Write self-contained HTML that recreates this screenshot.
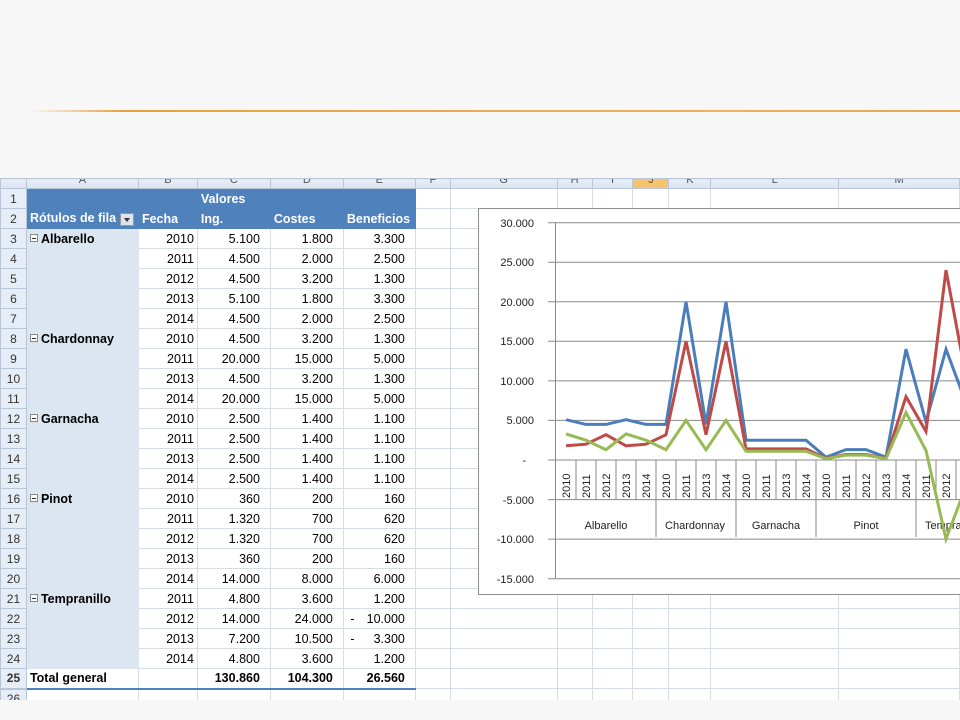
<!DOCTYPE html>
<html><head><meta charset="utf-8">
<style>
*{margin:0;padding:0;box-sizing:border-box}
body{width:960px;height:720px;overflow:hidden;background:#f7f7f7;position:relative;font-family:"Liberation Sans",sans-serif}
#line{position:absolute;left:30px;top:110px;width:930px;height:2px;background:linear-gradient(90deg,rgba(240,170,60,0),#eaa040 10%,#eeaa50 50%,#f0b060 75%,#eaa548)}
#sheet{position:absolute;left:0;top:178px;width:960px;height:522px;background:#fff;overflow:hidden}
table{border-collapse:collapse;table-layout:fixed;position:absolute;left:0;top:0}
td{height:20px;border:1px solid #d6dde9;font-size:12.5px;color:#000;white-space:nowrap;overflow:hidden;padding:0 3px;text-align:right}
tr.ch td{height:10px;background:linear-gradient(#e9eff8,#d9e3f0);border-color:#b9c6d8;font-size:11px;color:#555;text-align:center;line-height:2px;vertical-align:top}
td.rh{background:#e6edf7;color:#333;text-align:center;border-color:#b9c6d8;font-size:12px;padding:0}
td.h{background:#4f81bd;color:#fff;font-weight:bold;text-align:left;border-color:#4f81bd}
td.a{background:#dce6f1;text-align:left;font-weight:bold;border-color:#dce6f1}
tr.tot td{border-top:1.5px solid #4f81bd;border-bottom:2px solid #4f81bd;font-weight:bold}
tr.tot td.rh{border-color:#b9c6d8}
.bx{display:inline-block;width:8px;height:8px;border:1px solid #888;margin-right:3px;position:relative;top:-1px;background:#fff}
.bx:after{content:"";position:absolute;left:1px;top:3px;width:4px;height:1px;background:#333}
svg{position:absolute;left:0;top:0}
</style></head><body>
<div id="line"></div>
<div id="sheet">
<table>
<colgroup><col style="width:26px"><col style="width:112px"><col style="width:59px"><col style="width:73px"><col style="width:73px"><col style="width:72px"><col style="width:35px"><col style="width:107px"><col style="width:35px"><col style="width:41px"><col style="width:36px"><col style="width:42px"><col style="width:128px"><col style="width:121px"></colgroup>
<tr class="ch"><td></td><td>A</td><td>B</td><td>C</td><td>D</td><td>E</td><td>F</td><td>G</td><td>H</td><td>I</td><td style="background:#f6c36e">J</td><td>K</td><td>L</td><td>M</td></tr>
<tr><td class="rh">1</td><td class="h"></td><td class="h"></td><td class="h">Valores</td><td class="h"></td><td class="h"></td><td></td><td></td><td></td><td></td><td></td><td></td><td></td><td></td></tr>
<tr><td class="rh">2</td><td class="h">Rótulos de fila <span style="display:inline-block;width:14px;height:13px;background:#dfe4ea;border:1px solid #999;vertical-align:middle;position:relative"><span style="position:absolute;left:3px;top:4px;border:3px solid transparent;border-top:4px solid #333"></span></span></td><td class="h">Fecha</td><td class="h">Ing.</td><td class="h">Costes</td><td class="h">Beneficios</td><td></td><td></td><td></td><td></td><td></td><td></td><td></td><td></td></tr>
<tr><td class="rh">3</td><td class="a"><span class="bx"></span>Albarello</td><td>2010</td><td>5.100&nbsp;&nbsp;</td><td>1.800&nbsp;&nbsp;</td><td>3.300&nbsp;&nbsp;</td><td></td><td></td><td></td><td></td><td></td><td></td><td></td><td></td></tr>
<tr><td class="rh">4</td><td class="a"></td><td>2011</td><td>4.500&nbsp;&nbsp;</td><td>2.000&nbsp;&nbsp;</td><td>2.500&nbsp;&nbsp;</td><td></td><td></td><td></td><td></td><td></td><td></td><td></td><td></td></tr>
<tr><td class="rh">5</td><td class="a"></td><td>2012</td><td>4.500&nbsp;&nbsp;</td><td>3.200&nbsp;&nbsp;</td><td>1.300&nbsp;&nbsp;</td><td></td><td></td><td></td><td></td><td></td><td></td><td></td><td></td></tr>
<tr><td class="rh">6</td><td class="a"></td><td>2013</td><td>5.100&nbsp;&nbsp;</td><td>1.800&nbsp;&nbsp;</td><td>3.300&nbsp;&nbsp;</td><td></td><td></td><td></td><td></td><td></td><td></td><td></td><td></td></tr>
<tr><td class="rh">7</td><td class="a"></td><td>2014</td><td>4.500&nbsp;&nbsp;</td><td>2.000&nbsp;&nbsp;</td><td>2.500&nbsp;&nbsp;</td><td></td><td></td><td></td><td></td><td></td><td></td><td></td><td></td></tr>
<tr><td class="rh">8</td><td class="a"><span class="bx"></span>Chardonnay</td><td>2010</td><td>4.500&nbsp;&nbsp;</td><td>3.200&nbsp;&nbsp;</td><td>1.300&nbsp;&nbsp;</td><td></td><td></td><td></td><td></td><td></td><td></td><td></td><td></td></tr>
<tr><td class="rh">9</td><td class="a"></td><td>2011</td><td>20.000&nbsp;&nbsp;</td><td>15.000&nbsp;&nbsp;</td><td>5.000&nbsp;&nbsp;</td><td></td><td></td><td></td><td></td><td></td><td></td><td></td><td></td></tr>
<tr><td class="rh">10</td><td class="a"></td><td>2013</td><td>4.500&nbsp;&nbsp;</td><td>3.200&nbsp;&nbsp;</td><td>1.300&nbsp;&nbsp;</td><td></td><td></td><td></td><td></td><td></td><td></td><td></td><td></td></tr>
<tr><td class="rh">11</td><td class="a"></td><td>2014</td><td>20.000&nbsp;&nbsp;</td><td>15.000&nbsp;&nbsp;</td><td>5.000&nbsp;&nbsp;</td><td></td><td></td><td></td><td></td><td></td><td></td><td></td><td></td></tr>
<tr><td class="rh">12</td><td class="a"><span class="bx"></span>Garnacha</td><td>2010</td><td>2.500&nbsp;&nbsp;</td><td>1.400&nbsp;&nbsp;</td><td>1.100&nbsp;&nbsp;</td><td></td><td></td><td></td><td></td><td></td><td></td><td></td><td></td></tr>
<tr><td class="rh">13</td><td class="a"></td><td>2011</td><td>2.500&nbsp;&nbsp;</td><td>1.400&nbsp;&nbsp;</td><td>1.100&nbsp;&nbsp;</td><td></td><td></td><td></td><td></td><td></td><td></td><td></td><td></td></tr>
<tr><td class="rh">14</td><td class="a"></td><td>2013</td><td>2.500&nbsp;&nbsp;</td><td>1.400&nbsp;&nbsp;</td><td>1.100&nbsp;&nbsp;</td><td></td><td></td><td></td><td></td><td></td><td></td><td></td><td></td></tr>
<tr><td class="rh">15</td><td class="a"></td><td>2014</td><td>2.500&nbsp;&nbsp;</td><td>1.400&nbsp;&nbsp;</td><td>1.100&nbsp;&nbsp;</td><td></td><td></td><td></td><td></td><td></td><td></td><td></td><td></td></tr>
<tr><td class="rh">16</td><td class="a"><span class="bx"></span>Pinot</td><td>2010</td><td>360&nbsp;&nbsp;</td><td>200&nbsp;&nbsp;</td><td>160&nbsp;&nbsp;</td><td></td><td></td><td></td><td></td><td></td><td></td><td></td><td></td></tr>
<tr><td class="rh">17</td><td class="a"></td><td>2011</td><td>1.320&nbsp;&nbsp;</td><td>700&nbsp;&nbsp;</td><td>620&nbsp;&nbsp;</td><td></td><td></td><td></td><td></td><td></td><td></td><td></td><td></td></tr>
<tr><td class="rh">18</td><td class="a"></td><td>2012</td><td>1.320&nbsp;&nbsp;</td><td>700&nbsp;&nbsp;</td><td>620&nbsp;&nbsp;</td><td></td><td></td><td></td><td></td><td></td><td></td><td></td><td></td></tr>
<tr><td class="rh">19</td><td class="a"></td><td>2013</td><td>360&nbsp;&nbsp;</td><td>200&nbsp;&nbsp;</td><td>160&nbsp;&nbsp;</td><td></td><td></td><td></td><td></td><td></td><td></td><td></td><td></td></tr>
<tr><td class="rh">20</td><td class="a"></td><td>2014</td><td>14.000&nbsp;&nbsp;</td><td>8.000&nbsp;&nbsp;</td><td>6.000&nbsp;&nbsp;</td><td></td><td></td><td></td><td></td><td></td><td></td><td></td><td></td></tr>
<tr><td class="rh">21</td><td class="a"><span class="bx"></span>Tempranillo</td><td>2011</td><td>4.800&nbsp;&nbsp;</td><td>3.600&nbsp;&nbsp;</td><td>1.200&nbsp;&nbsp;</td><td></td><td></td><td></td><td></td><td></td><td></td><td></td><td></td></tr>
<tr><td class="rh">22</td><td class="a"></td><td>2012</td><td>14.000&nbsp;&nbsp;</td><td>24.000&nbsp;&nbsp;</td><td><span style="float:left">&nbsp;-</span>10.000&nbsp;&nbsp;</td><td></td><td></td><td></td><td></td><td></td><td></td><td></td><td></td></tr>
<tr><td class="rh">23</td><td class="a"></td><td>2013</td><td>7.200&nbsp;&nbsp;</td><td>10.500&nbsp;&nbsp;</td><td><span style="float:left">&nbsp;-</span>3.300&nbsp;&nbsp;</td><td></td><td></td><td></td><td></td><td></td><td></td><td></td><td></td></tr>
<tr><td class="rh">24</td><td class="a"></td><td>2014</td><td>4.800&nbsp;&nbsp;</td><td>3.600&nbsp;&nbsp;</td><td>1.200&nbsp;&nbsp;</td><td></td><td></td><td></td><td></td><td></td><td></td><td></td><td></td></tr>
<tr class="tot"><td class="rh">25</td><td style="text-align:left">Total general</td><td></td><td>130.860&nbsp;&nbsp;</td><td>104.300&nbsp;&nbsp;</td><td>26.560&nbsp;&nbsp;</td><td style="border-top:1px solid #d6dde9;border-bottom:1px solid #d6dde9"></td><td style="border-top:1px solid #d6dde9;border-bottom:1px solid #d6dde9"></td><td style="border-top:1px solid #d6dde9;border-bottom:1px solid #d6dde9"></td><td style="border-top:1px solid #d6dde9;border-bottom:1px solid #d6dde9"></td><td style="border-top:1px solid #d6dde9;border-bottom:1px solid #d6dde9"></td><td style="border-top:1px solid #d6dde9;border-bottom:1px solid #d6dde9"></td><td style="border-top:1px solid #d6dde9;border-bottom:1px solid #d6dde9"></td><td style="border-top:1px solid #d6dde9;border-bottom:1px solid #d6dde9"></td></tr>
<tr><td class="rh">26</td><td></td><td></td><td></td><td></td><td></td><td></td><td></td><td></td><td></td><td></td><td></td><td></td><td></td></tr>
</table>
</div>
<svg width="960" height="720" font-family="Liberation Sans, sans-serif" font-size="11">
<rect x="478.5" y="208.5" width="500" height="386" fill="#fff" stroke="#8c8c8c"/>
<g stroke="#8a8a8a" stroke-width="1">
<line x1="548" y1="222.7" x2="960" y2="222.7"/><line x1="548" y1="262.2" x2="960" y2="262.2"/><line x1="548" y1="301.8" x2="960" y2="301.8"/><line x1="548" y1="341.3" x2="960" y2="341.3"/><line x1="548" y1="380.9" x2="960" y2="380.9"/><line x1="548" y1="420.4" x2="960" y2="420.4"/><line x1="548" y1="460" x2="960" y2="460"/><line x1="548" y1="499.6" x2="960" y2="499.6"/><line x1="548" y1="539.1" x2="960" y2="539.1"/><line x1="548" y1="578.7" x2="960" y2="578.7"/>
<line x1="555.5" y1="222" x2="555.5" y2="579"/>
<path d="M576 460v40M596 460v40M616 460v40M636 460v40M676 460v40M696 460v40M716 460v40M756 460v40M776 460v40M796 460v40M836 460v40M856 460v40M876 460v40M896 460v40M936 460v40M956 460v40M656 460v77M736 460v77M816 460v77M916 460v77"/>
</g>
<g fill="#222" text-anchor="end">
<text x="534" y="227">30.000</text><text x="534" y="266">25.000</text><text x="534" y="306">20.000</text><text x="534" y="345">15.000</text><text x="534" y="385">10.000</text><text x="534" y="424">5.000</text><text x="526" y="464">-</text><text x="534" y="504">-5.000</text><text x="534" y="543">-10.000</text><text x="534" y="583">-15.000</text>
</g>
<g fill="#222" font-size="11">
<text transform="translate(570,498) rotate(-90)">2010</text><text transform="translate(590,498) rotate(-90)">2011</text><text transform="translate(610,498) rotate(-90)">2012</text><text transform="translate(630,498) rotate(-90)">2013</text><text transform="translate(650,498) rotate(-90)">2014</text>
<text transform="translate(670,498) rotate(-90)">2010</text><text transform="translate(690,498) rotate(-90)">2011</text><text transform="translate(710,498) rotate(-90)">2013</text><text transform="translate(730,498) rotate(-90)">2014</text>
<text transform="translate(750,498) rotate(-90)">2010</text><text transform="translate(770,498) rotate(-90)">2011</text><text transform="translate(790,498) rotate(-90)">2013</text><text transform="translate(810,498) rotate(-90)">2014</text>
<text transform="translate(830,498) rotate(-90)">2010</text><text transform="translate(850,498) rotate(-90)">2011</text><text transform="translate(870,498) rotate(-90)">2012</text><text transform="translate(890,498) rotate(-90)">2013</text><text transform="translate(910,498) rotate(-90)">2014</text>
<text transform="translate(930,498) rotate(-90)">2011</text><text transform="translate(950,498) rotate(-90)">2012</text>
<text x="606" y="529" text-anchor="middle">Albarello</text><text x="695" y="529" text-anchor="middle">Chardonnay</text><text x="776" y="529" text-anchor="middle">Garnacha</text><text x="866" y="529" text-anchor="middle">Pinot</text><text x="925" y="529">Tempranillo</text>
</g>
<g fill="none" stroke-width="3" stroke-linejoin="miter">
<polyline stroke="#4a7ebb" points="566,419.7 586,424.4 606,424.4 626,419.7 646,424.4 666,424.4 686,301.8 706,424.4 726,301.8 746,440.2 766,440.2 786,440.2 806,440.2 826,457.2 846,449.6 866,449.6 886,457.2 906,349.2 926,422 946,349.2 966,403 986,422"/>
<polyline stroke="#be4b48" points="566,445.8 586,444.2 606,434.7 626,445.8 646,444.2 666,434.7 686,341.3 706,434.7 726,341.3 746,448.9 766,448.9 786,448.9 806,448.9 826,458.4 846,454.5 866,454.5 886,458.4 906,396.7 926,431.5 946,270.1 966,376.9 986,431.5"/>
<polyline stroke="#98b954" points="566,433.9 586,440.2 606,449.7 626,433.9 646,440.2 666,449.7 686,420.4 706,449.7 726,420.4 746,451.3 766,451.3 786,451.3 806,451.3 826,458.7 846,455.1 866,455.1 886,458.7 906,412.5 926,450.5 946,539.1 966,486.1 986,450.5"/>
</g>
</svg>
</body></html>
